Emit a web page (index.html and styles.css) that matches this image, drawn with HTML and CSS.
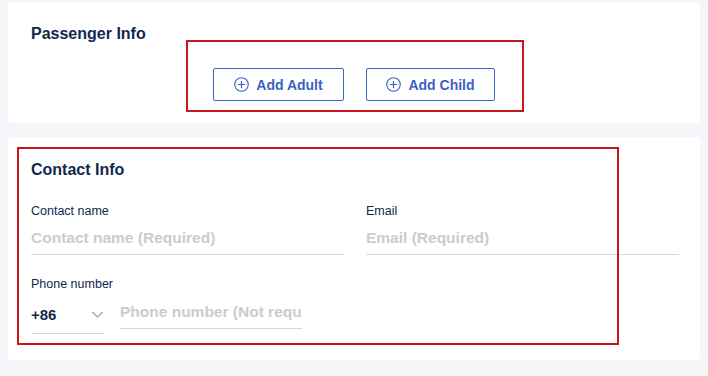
FILE: index.html
```html
<!DOCTYPE html>
<html lang="en">
<head>
    <meta charset="UTF-8">
    <meta name="viewport" content="width=device-width, initial-scale=1.0">
    <title>Booking - Passenger &amp; Contact</title>
    <link rel="stylesheet" href="styles.css">
</head>
<body>
    <!-- Passenger Info -->
    <div class="card passenger-card">
        <h2 class="card-title">Passenger Info</h2>
        <div class="add-buttons">
            <button class="add-btn">
                <svg class="plus-icon" viewBox="0 0 16 16" width="15" height="15">
                    <circle cx="8" cy="8" r="7.2" fill="none" stroke="currentColor" stroke-width="1.2"/>
                    <path d="M8 4.3v7.4M4.3 8h7.4" stroke="currentColor" stroke-width="1.2"/>
                </svg>
                Add Adult
            </button>
            <button class="add-btn">
                <svg class="plus-icon" viewBox="0 0 16 16" width="15" height="15">
                    <circle cx="8" cy="8" r="7.2" fill="none" stroke="currentColor" stroke-width="1.2"/>
                    <path d="M8 4.3v7.4M4.3 8h7.4" stroke="currentColor" stroke-width="1.2"/>
                </svg>
                Add Child
            </button>
        </div>
        <div class="mark mark-buttons"></div>
    </div>

    <!-- Contact Info -->
    <div class="card contact-card">
        <h2 class="card-title">Contact Info</h2>
        <div class="field-row">
            <div class="field">
                <label class="field-label">Contact name</label>
                <input class="field-input" type="text" placeholder="Contact name (Required)">
            </div>
            <div class="field">
                <label class="field-label">Email</label>
                <input class="field-input" type="text" placeholder="Email (Required)">
            </div>
        </div>
        <div class="field phone-field">
            <label class="field-label">Phone number</label>
            <div class="phone-row">
                <div class="country-code">
                    <span>+86</span>
                    <svg class="chevron" viewBox="0 0 14 8" width="13" height="7">
                        <path d="M1 1l6 6 6-6" fill="none" stroke="#8a8f99" stroke-width="1.2"/>
                    </svg>
                </div>
                <input class="field-input phone-input" type="text" placeholder="Phone number (Not required)">
            </div>
        </div>
        <div class="mark mark-contact"></div>
    </div>
</body>
</html>
```

FILE: styles.css
```css
/* Basic Reset */
body, h2, button, input, .card, .mark {
    margin: 0;
    padding: 0;
    box-sizing: border-box;
}

body {
    font-family: "Liberation Sans", Arial, sans-serif;
    background-color: #f4f6f9;
    color: #0f294d;
    padding: 2px 8px 0;
}

/* Cards */
.card {
    position: relative;
    background-color: #fff;
    border-radius: 4px;
    padding: 22px 23px;
}

.passenger-card {
    height: 121px;
}

.contact-card {
    margin-top: 14px;
    height: 223px;
    padding-top: 23px;
}

.card-title {
    font-size: 16px;
    line-height: 20px;
    font-weight: bold;
    color: #0f294d;
}

/* Add buttons */
.add-buttons {
    display: flex;
    justify-content: center;
    gap: 22px;
    margin-top: 24px;
}

.add-btn {
    display: flex;
    align-items: center;
    justify-content: center;
    gap: 7px;
    width: 131px;
    height: 33px;
    border: 1px solid #3f63c0;
    border-radius: 2px;
    background-color: #fff;
    color: #3b5fc4;
    font-family: inherit;
    font-size: 14px;
    font-weight: bold;
    cursor: pointer;
}

.add-btn:nth-child(2) {
    width: 129px;
}

/* Fields */
.field-row {
    display: grid;
    grid-template-columns: 313px 313px;
    gap: 22px;
    margin-top: 23px;
}

.field {
    display: flex;
    flex-direction: column;
}

.field-label {
    font-size: 12.5px;
    line-height: 16px;
    color: #0f294d;
}

.field-input {
    margin-top: 6px;
    height: 30px;
    padding-bottom: 3px;
    border: none;
    border-bottom: 1px solid #d6d9de;
    outline: none;
    font-family: inherit;
    font-size: 15.5px;
    font-weight: bold;
    color: #0f294d;
    background: transparent;
}

.field-input::placeholder {
    color: #c9ccd1;
}

.phone-field {
    margin-top: 21px;
}

.phone-row {
    display: flex;
    gap: 15px;
}

.country-code {
    display: flex;
    align-items: center;
    justify-content: space-between;
    width: 73px;
    height: 32px;
    margin-top: 6px;
    padding-right: 1px;
    padding-bottom: 3px;
    border-bottom: 1px solid #d6d9de;
    font-size: 15px;
    font-weight: bold;
}

.phone-input {
    width: 182px;
    height: 31px;
}

/* Red annotation frames */
.mark {
    position: absolute;
    border: 2px solid #c8161d;
    pointer-events: none;
}

.mark-buttons {
    left: 178px;
    top: 38px;
    width: 338px;
    height: 72px;
}

.mark-contact {
    left: 9px;
    top: 10px;
    width: 602px;
    height: 198px;
}
```
